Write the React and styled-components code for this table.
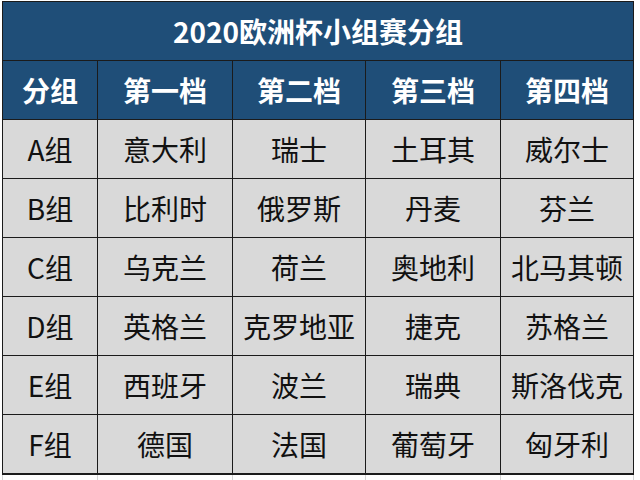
import React from "react";
import styled, { createGlobalStyle } from "styled-components";

const Global = createGlobalStyle`
  html, body { margin: 0; padding: 0; background: #ffffff; }
  body { font-family: "Microsoft YaHei", "Noto Sans CJK SC", "Noto Sans", sans-serif; }
`;

const Sheet = styled.div`
  width: 640px;
  height: 480px;
  overflow: hidden;
  box-sizing: border-box;
  padding: 1px 0 0 2px;
  background: #ffffff;
`;

const cols = "94px 134px 132px 134px 132px";

const Table = styled.div`
  display: grid;
  grid-template-columns: ${cols};
  grid-auto-rows: 58px;
  gap: 1px;
  padding: 1px 1px 2px 1px;
  background: #1b1b1b;
  width: max-content;
`;

const Cell = styled.div`
  display: flex;
  align-items: center;
  justify-content: center;
  font-size: 28px;
  line-height: 1;
  white-space: nowrap;
  background: ${(p) => (p.$head ? "#1f4e78" : "#d9d9d9")};
  color: ${(p) => (p.$head ? "#ffffff" : "#111111")};
  font-weight: ${(p) => (p.$head ? 700 : 400)};
  ${(p) => (p.$span ? "grid-column: 1 / -1;" : "")}
`;

const Gridlines = styled.div`
  display: grid;
  grid-template-columns: ${cols};
  gap: 1px;
  padding: 0 1px;
  height: 20px;
  background: #d4d4d4;
  width: max-content;
`;

const GhostCell = styled.div`
  background: #ffffff;
`;

const header = ["分组", "第一档", "第二档", "第三档", "第四档"];
const rows = [
  ["A组", "意大利", "瑞士", "土耳其", "威尔士"],
  ["B组", "比利时", "俄罗斯", "丹麦", "芬兰"],
  ["C组", "乌克兰", "荷兰", "奥地利", "北马其顿"],
  ["D组", "英格兰", "克罗地亚", "捷克", "苏格兰"],
  ["E组", "西班牙", "波兰", "瑞典", "斯洛伐克"],
  ["F组", "德国", "法国", "葡萄牙", "匈牙利"],
];

export default function App() {
  return (
    <Sheet>
      <Global />
      <Table>
        <Cell $head $span>2020欧洲杯小组赛分组</Cell>
        {header.map((h) => (
          <Cell $head key={h}>{h}</Cell>
        ))}
        {rows.map((r) =>
          r.map((c, i) => <Cell key={r[0] + i}>{c}</Cell>)
        )}
      </Table>
      <Gridlines>
        <GhostCell />
        <GhostCell />
        <GhostCell />
        <GhostCell />
        <GhostCell />
      </Gridlines>
    </Sheet>
  );
}
